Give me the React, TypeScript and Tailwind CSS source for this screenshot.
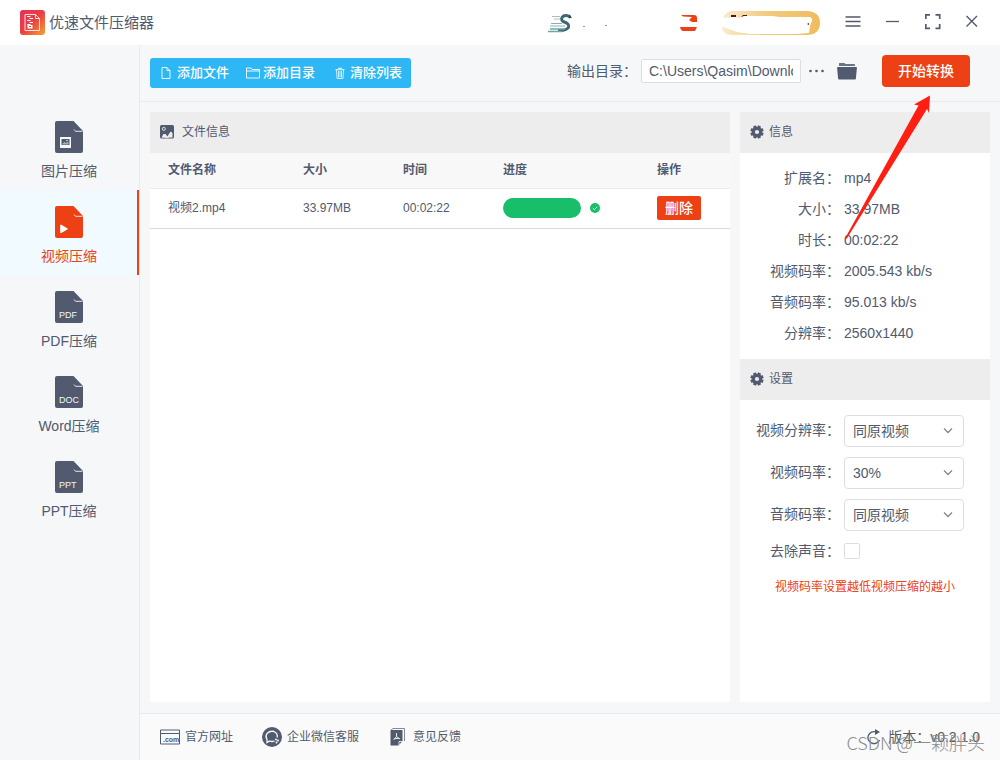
import { useState } from 'react';
import type { ReactNode } from 'react';

interface NavItem {
  label: string;
  kind: 'image' | 'video' | 'text';
  tag?: string;
}

const navItems: NavItem[] = [
  { label: '图片压缩', kind: 'image' },
  { label: '视频压缩', kind: 'video' },
  { label: 'PDF压缩', kind: 'text', tag: 'PDF' },
  { label: 'Word压缩', kind: 'text', tag: 'DOC' },
  { label: 'PPT压缩', kind: 'text', tag: 'PPT' },
];

const fileInfo = [
  { label: '扩展名', value: 'mp4' },
  { label: '大小', value: '33.97MB' },
  { label: '时长', value: '00:02:22' },
  { label: '视频码率', value: '2005.543 kb/s' },
  { label: '音频码率', value: '95.013 kb/s' },
  { label: '分辨率', value: '2560x1440' },
];

const selects = [
  { id: 'resolution', label: '视频分辨率', value: '同原视频' },
  { id: 'video-rate', label: '视频码率', value: '30%' },
  { id: 'audio-rate', label: '音频码率', value: '同原视频' },
];

function AppLogo() {
  return (
    <svg width="25" height="25" viewBox="0 0 25 25" fill="none">
      <defs>
        <linearGradient id="logo" x1="0" y1="0" x2="1" y2="1">
          <stop offset="0" stopColor="#e6305a" />
          <stop offset="0.5" stopColor="#ea4040" />
          <stop offset="1" stopColor="#f7a233" />
        </linearGradient>
      </defs>
      <rect width="25" height="25" rx="3" fill="url(#logo)" />
      <path d="M5 4.500H15.500L19.500 8.500V20.500H5Z M15.500 4.500V8.500H19.500" stroke="#fff" strokeOpacity="0.850" />
      <path d="M7 6.500H10.500M9.500 8.500H13M7 10.500H10.500M9.500 12.500H13M7 14.500H10.500" stroke="#fff" strokeWidth="1.200" />
      <path d="M7.500 15H12.500V18.500H7.500Z" fill="#fff" />
      <path d="M9 16.500H11" stroke="#e94040" />
    </svg>
  );
}

function NavIcon({ item }: { item: NavItem }) {
  return (
    <svg width="28" height="32" viewBox="0 0 28 32">
      <path d="M2 0H18.500L28 10V30Q28 32 26 32H2Q0 32 0 30V2Q0 0 2 0Z" fill="currentColor" />
      <path d="M19 8.500L20.500 10.300H27.500" fill="none" stroke="#f5f7f9" strokeWidth="0.900" />
      {item.kind === 'image' && (
        <>
          <rect x="5" y="16" width="11" height="11" fill="#f5f7f9" />
          <rect x="6.500" y="18" width="8" height="6" fill="#515a6e" />
          <path d="M7.500 23.500V22.500L9.500 21L11 22L13.500 20.500V23.500Z" fill="#a9afbc" />
          <circle cx="12" cy="19.500" r="0.700" fill="#f5f7f9" />
        </>
      )}
      {item.kind === 'video' && (
        <path d="M5.200 19.500Q5.200 18.300 6.300 18.800L12.300 22.200Q13.200 22.800 12.300 23.400L6.300 26.900Q5.200 27.400 5.200 26.300Z" fill="#fff" />
      )}
      {item.kind === 'text' && (
        <text x="4" y="27" fontSize="9" fontFamily="Liberation Sans, sans-serif" fill="#f5f7f9">
          {item.tag}
        </text>
      )}
    </svg>
  );
}

const teeth = [0, 45, 90, 135, 180, 225, 270, 315];

function GearIcon() {
  return (
    <svg width="14" height="14" viewBox="0 0 14 14">
      {teeth.map((angle) => (
        <rect
          key={angle}
          x="5.400"
          y="0.300"
          width="3.200"
          height="4"
          rx="0.500"
          fill="currentColor"
          transform={`rotate(${angle + 22.5} 7 7)`}
        />
      ))}
      <circle cx="7" cy="7" r="3.700" fill="none" stroke="currentColor" strokeWidth="3.200" />
    </svg>
  );
}

function PanelTitle({ children }: { children: ReactNode }) {
  return (
    <h2 className="flex items-center gap-[5px] h-[41px] px-2.5 pb-0.5 bg-[#ededed] text-xs">
      <GearIcon />
      {children}
    </h2>
  );
}

function TitleBar() {
  return (
    <header className="flex items-center justify-between h-[45px] px-5 bg-white">
      <div className="flex items-center gap-1">
        <AppLogo />
        <h1 className="text-[15px] leading-5">优速文件压缩器</h1>
      </div>
      <div className="flex items-center">
        {/* account avatar and badge */}
        <svg width="150" height="24" viewBox="0 0 150 24" fill="none">
          <path d="M22 6Q19 3.500 15.500 5Q12 7.500 15 10.500Q22 12.500 20.500 16.500Q18 20 10 19.500" stroke="#3e6673" strokeWidth="3" />
          <path d="M4 5.500H12M6 8H12" stroke="#9aa8b0" strokeWidth="0.800" />
          <path d="M3 12.500H14M2 15H17" stroke="#7fa7ae" strokeWidth="0.900" />
          <path d="M2 18H17M0 20.500H14" stroke="#6fa5a9" strokeWidth="1.400" />
          <path d="M21 3.500L24 6.500L21 7.500" fill="#33434f" />
          <path d="M35 15.500H37M57 14.500H59" stroke="#777" strokeWidth="0.800" />
          <path d="M133 4H146Q149 4 149 7V11H144L141 9L144 6L135 5.500Z" fill="#ed4014" />
          <path d="M132 16H149L147 20H135Q133 20 132 16Z" fill="#ed4014" />
        </svg>
        <svg className="ml-[22px]" width="100" height="24" viewBox="0 0 100 24">
          <defs>
            <linearGradient id="vip">
              <stop offset="0" stopColor="#faedd0" />
              <stop offset="0.450" stopColor="#f2cc80" />
              <stop offset="1" stopColor="#efbc5c" />
            </linearGradient>
          </defs>
          <path d="M12 0H88Q100 1 100 12Q100 23 88 24H12Q6 24 3 20L1 15L0 12L3 7Q6 0 12 0Z" fill="url(#vip)" />
          <path d="M0 7L14 6L20 7L23 5H52L60 6H90Q94 8 91 12Q90 14 89 22L77 23H30L17 21L3 16L0 17Z" fill="#fff" />
          <path d="M11 4H16V6H11ZM21 6L23 4H27V5H24ZM87 13L89 12V14Z" fill="#4b1720" />
        </svg>
        <div className="flex items-center gap-6 ml-[25px]">
          <button aria-label="菜单" className="w-4 h-6">
            <svg width="16" height="24" viewBox="0 0 16 24" stroke="currentColor" strokeWidth="1.300">
              <path d="M0.500 6H15.500M0.500 10.500H15.500M0.500 15H15.500" />
            </svg>
          </button>
          <button aria-label="最小化" className="w-4 h-6">
            <svg width="16" height="24" viewBox="0 0 16 24" stroke="currentColor" strokeWidth="1.300">
              <path d="M1 10.500H14" />
            </svg>
          </button>
          <button aria-label="最大化" className="w-4 h-6">
            <svg width="16" height="24" viewBox="0 0 16 24" fill="none" stroke="currentColor" strokeWidth="1.700">
              <path d="M0.800 8V3.800H5M10.500 3.800H14.700V8M14.700 13V17.300H10.500M5 17.300H0.800V13" />
            </svg>
          </button>
          <button aria-label="关闭" className="w-[15px] h-6">
            <svg width="15" height="24" viewBox="0 0 15 24" stroke="currentColor" strokeWidth="1.400">
              <path d="M1.500 5L12 15.500M12 5L1.500 15.500" />
            </svg>
          </button>
        </div>
      </div>
    </header>
  );
}

function Toolbar() {
  return (
    <div className="flex items-center justify-between h-[57px] pl-2.5 pr-[30px] border-b border-[#e8eaec]">
      <div className="flex items-center h-[30px] rounded-[3px] bg-[#2db7f5] text-white text-[13px] font-medium">
        <button className="flex items-center gap-1.5 h-full pl-[11px] pr-[9px]">
          <svg width="10" height="12" viewBox="0 0 10 12" fill="none" stroke="currentColor" strokeWidth="0.900">
            <path d="M1 0.500H6L9 3.500V11.500H1ZM6 0.500V3.500H9" />
          </svg>
          添加文件
        </button>
        <button className="flex items-center gap-[3px] h-full pl-2 pr-[9px]">
          <svg width="14" height="12" viewBox="0 0 14 12" fill="none" stroke="currentColor" strokeWidth="0.900">
            <path d="M0.500 11V1H5L6 2.500H13.500V11ZM0.500 4H13.500" />
          </svg>
          添加目录
        </button>
        <button className="flex items-center gap-[5px] h-full pl-[11px] pr-[9px]">
          <svg width="10" height="12" viewBox="0 0 10 12" opacity="0.750">
            <path d="M0.500 2H3V0.800H7V2H9.500V3.300H0.500Z" fill="currentColor" />
            <path d="M1.500 3L2 11.500H8L8.500 3M3.500 4V10.500M5 4V10.500M6.500 4V10.500" fill="none" stroke="currentColor" />
          </svg>
          清除列表
        </button>
      </div>
      <div className="flex items-center pb-1">
        <label htmlFor="output-dir" className="text-sm leading-6">输出目录：</label>
        <input
          id="output-dir"
          type="text"
          defaultValue="C:\Users\Qasim\Downloads"
          className="w-40 h-6 ml-1 px-[7px] rounded-xs border border-[#dcdee2] bg-white text-sm outline-none"
        />
        <button aria-label="选择目录" className="ml-2">
          <svg width="16" height="16" viewBox="0 0 16 16" fill="currentColor">
            <circle cx="1.500" cy="8" r="1.300" />
            <circle cx="7.500" cy="8" r="1.300" />
            <circle cx="13.500" cy="8" r="1.300" />
          </svg>
        </button>
        <button aria-label="打开目录" className="ml-3">
          <svg width="20" height="18" viewBox="0 0 20 18" fill="currentColor">
            <path d="M2 4V1.500Q2 1 2.500 1H7Q8 1 8.500 2H17Q18 2 18 3V4Z" opacity="0.850" />
            <path d="M0.800 5H19.200Q20 5 19.900 6L18.900 16.500Q18.800 17.500 18 17.500H2Q1.200 17.500 1.100 16.500L0.100 6Q0 5 0.800 5Z" />
          </svg>
        </button>
        <button className="w-[88px] h-8 ml-[25px] rounded bg-[#ed4014] text-white text-sm font-medium">开始转换</button>
      </div>
    </div>
  );
}

function FilePanel() {
  return (
    <section className="flex-1 min-w-0 bg-white">
      <h2 className="flex items-center gap-2 h-[41px] px-2.5 pb-0.5 bg-[#ededed] text-xs">
        <svg width="14" height="14" viewBox="0 0 14 14">
          <rect width="14" height="13.500" rx="1.500" fill="currentColor" />
          <circle cx="3.800" cy="3.800" r="1.500" fill="none" stroke="#ededed" strokeWidth="0.900" />
          <path d="M1.500 12.500L3.500 9L5.500 9L7.500 11.500L9.500 8L11 6.500L12.500 8V12.500H10L7 13Z" fill="#ededed" />
        </svg>
        文件信息
      </h2>
      <table className="w-full table-fixed text-left text-xs">
        <thead>
          <tr className="h-[35px] border-b border-[#e8eaec] bg-[#f8f8f9]">
            <th className="w-[135px] pl-[18px] font-bold">文件名称</th>
            <th className="w-[100px] pl-[18px] font-bold">大小</th>
            <th className="w-[100px] pl-[18px] font-bold">时间</th>
            <th className="pl-[18px] font-bold">进度</th>
            <th className="w-[91px] pl-[18px] font-bold">操作</th>
          </tr>
        </thead>
        <tbody>
          <tr className="h-10 border-b border-[#d7dadf]">
            <td className="pl-[18px]">视频2.mp4</td>
            <td className="pl-[18px]">33.97MB</td>
            <td className="pl-[18px]">00:02:22</td>
            <td className="pl-[18px]">
              <div className="flex items-center gap-[9px]">
                <div className="w-[78px] h-5 rounded-full bg-[#19be6b]" />
                <svg width="10" height="10" viewBox="0 0 10 10">
                  <circle cx="5" cy="5" r="5" fill="#19be6b" />
                  <path d="M2.800 5.200L4.400 6.700L7.300 3.700" fill="none" stroke="#fff" strokeWidth="0.800" />
                </svg>
              </div>
            </td>
            <td className="pl-[18px]">
              <button className="block w-11 h-6 rounded-xs bg-[#ed4014] text-white text-sm font-medium">删除</button>
            </td>
          </tr>
        </tbody>
      </table>
    </section>
  );
}

function SidePanel() {
  return (
    <aside className="w-[250px] shrink-0 bg-white text-sm">
      <PanelTitle>信息</PanelTitle>
      <dl className="pt-[9px] pb-[11px]">
        {fileInfo.map((row) => (
          <div key={row.label} className="flex items-center gap-1 h-[31px]">
            <dt className="w-[100px] text-right">{row.label}：</dt>
            <dd>{row.value}</dd>
          </div>
        ))}
      </dl>
      <PanelTitle>设置</PanelTitle>
      <div className="flex flex-col gap-2.5 pt-[15px]">
        {selects.map((s) => (
          <div key={s.id} className="flex items-center gap-1">
            <label htmlFor={s.id} className="w-[100px] pb-0.5 text-right">{s.label}：</label>
            <div className="relative w-[120px]">
              <select
                id={s.id}
                defaultValue={s.value}
                className="appearance-none w-full h-8 pl-2 pr-6 rounded border border-[#dcdee2] bg-white text-sm"
              >
                <option>{s.value}</option>
              </select>
              <svg
                className="absolute right-[11px] top-3 pointer-events-none"
                width="10"
                height="8"
                viewBox="0 0 10 8"
                fill="none"
                stroke="#808695"
                strokeWidth="1.300"
              >
                <path d="M1 1.500L5 5.500L9 1.500" />
              </svg>
            </div>
          </div>
        ))}
        <div className="flex items-center gap-1">
          <label htmlFor="mute" className="w-[100px] text-right">去除声音：</label>
          <input id="mute" type="checkbox" className="appearance-none w-4 h-4 rounded-xs border border-[#dcdee2] bg-white" />
        </div>
        <p className="pt-1 text-center text-xs leading-6 text-[#ed4014]">视频码率设置越低视频压缩的越小</p>
      </div>
    </aside>
  );
}

function Footer() {
  return (
    <footer className="flex items-center justify-between h-[47px] px-5 border-t border-[#e8eaec] bg-[#fafafa] text-xs">
      <div className="flex items-center">
        <a href="#site" className="flex items-center gap-[5px]">
          <svg width="20" height="16" viewBox="0 0 20 16">
            <path d="M0.500 1H19.500V15H0.500ZM0.500 4.500H19.500" fill="none" stroke="currentColor" />
            <text x="3" y="13" fontSize="7" fontWeight="bold" fontFamily="Liberation Sans, sans-serif" fill="currentColor">.com</text>
          </svg>
          官方网址
        </a>
        <a href="#service" className="flex items-center gap-[5px] ml-[29px]">
          <svg width="20" height="20" viewBox="0 0 20 20" fill="none">
            <circle cx="10" cy="10" r="10" fill="currentColor" />
            <path d="M12.500 14Q10 15 7.500 14L5 15.500V12.500Q3 9.500 5 6.500Q8 3.500 12 4.500Q16 6.500 15.200 10.500" stroke="#fafafa" strokeWidth="1.300" />
            <circle cx="14" cy="12.500" r="1" fill="#fafafa" />
            <circle cx="16" cy="13.500" r="1" fill="#fafafa" />
            <circle cx="14.500" cy="15.500" r="1" fill="#fafafa" />
          </svg>
          企业微信客服
        </a>
        <a href="#feedback" className="flex items-center gap-2 ml-[31px]">
          <svg width="15" height="18" viewBox="0 0 15 18" fill="none">
            <path d="M1 2L3 0.500H14.500V13" stroke="currentColor" strokeOpacity="0.700" />
            <path d="M0.500 2H12.500V13L8.500 17.500H0.500Z" fill="currentColor" />
            <path d="M9 17.500V13.500H12.500" stroke="#fafafa" strokeWidth="0.800" />
            <path d="M6.500 5V8.500L3.500 12M6.500 8.500L10 11M4.500 10.500H9" stroke="#fafafa" strokeWidth="0.900" />
          </svg>
          意见反馈
        </a>
      </div>
      <button className="flex items-center gap-1.5 text-sm">
        <svg width="15" height="18" viewBox="0 0 15 18" fill="none" stroke="currentColor" strokeWidth="1.300">
          <path d="M9 4A6 6 0 1 0 12.500 12" />
          <path d="M8 1L13 4L8 7Z" fill="currentColor" stroke="none" />
        </svg>
        版本：v0.2.1.0
      </button>
    </footer>
  );
}

export default function App() {
  const [active, setActive] = useState('视频压缩');

  return (
    <div className="relative flex flex-col min-h-screen bg-[#f5f7f9] text-[#515a6e] font-['Liberation_Sans','Noto_Sans_CJK_SC',sans-serif]">
      <TitleBar />
      <div className="flex flex-1">
        <nav className="w-[140px] shrink-0 pt-[60px] border-r border-[#e8eaec]">
          {navItems.map((item) => (
            <button
              key={item.label}
              onClick={() => setActive(item.label)}
              className={`flex flex-col items-center gap-2 w-full h-[85px] pl-px pt-4 text-sm border-r-2 ${
                active === item.label
                  ? 'border-[#ed4014] bg-[#f0faff] text-[#ed4014]'
                  : 'border-transparent'
              }`}
            >
              <NavIcon item={item} />
              {item.label}
            </button>
          ))}
        </nav>
        <main className="flex flex-col flex-1 min-w-0">
          <Toolbar />
          <div className="flex flex-1 gap-2.5 px-2.5 pt-2.5 pb-[11px]">
            <FilePanel />
            <SidePanel />
          </div>
          <Footer />
        </main>
      </div>

      {/* arrow pointing at the start button */}
      <svg
        className="absolute right-[60px] top-[90px] pointer-events-none"
        width="100"
        height="155"
        viewBox="0 0 100 155"
      >
        <path d="M90 5.500L74 14.500L78.500 15.500L5.500 147.500L6.500 149L87 19L89 23Z" fill="#ff1f12" />
      </svg>
      <span className="absolute right-[15px] bottom-1.5 text-[18px] leading-6 font-light text-[#8c8c8c] font-['Noto_Sans_CJK_SC',sans-serif] pointer-events-none">
        CSDN @一颗胖头
      </span>
    </div>
  );
}
